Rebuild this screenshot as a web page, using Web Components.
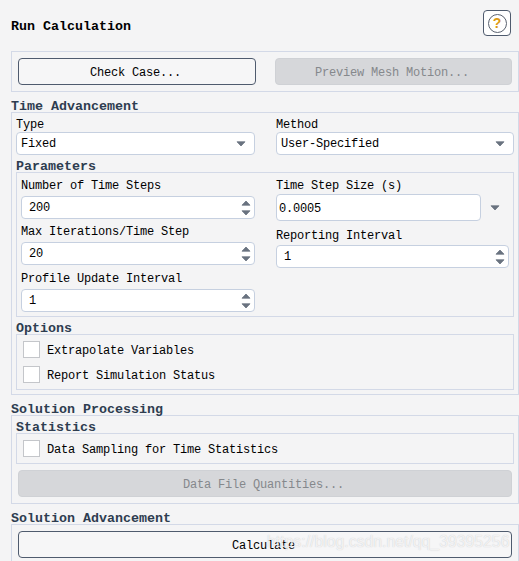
<!DOCTYPE html>
<html>
<head>
<meta charset="utf-8">
<style>
  html, body { margin: 0; height: 561px; overflow: hidden; background: #f4f4f5; }
  body { font: 12px/13px "Liberation Mono", monospace; letter-spacing: -0.2px; color: #000; }
</style>
</head>
<body>
<run-panel></run-panel>

<script>
const downArrow = '<svg width="10" height="6" viewBox="0 0 10 6"><path d="M1 .8H9L5 5Z" fill="#6a7380" stroke="#6a7380" stroke-width=".8" stroke-linejoin="round"/></svg>';

class UiGroup extends HTMLElement {
    constructor() {
        super();
        this.attachShadow({ mode: 'open' }).innerHTML = `
          <style>
            :host { display: block; }
            .heading { margin-top: 5px; height: 12px; font-weight: bold; color: #2e3d50; letter-spacing: 0; font-size: 13.33px; }
            :host([outer]) .heading { margin-top: 8px; }
            .box { border: 1px solid #d3d9e7; padding: 0 4px 4px; }
            :host([tight]) .box { padding: 6px; }
            :host([wide]) .box { padding: 0 4px 6px; }
          </style>
          <div class="heading" part="heading">${this.getAttribute('heading') || ''}</div>
          <div class="box"><slot></slot></div>`;
        if (!this.hasAttribute('heading')) this.shadowRoot.querySelector('.heading').remove();
    }
}

class UiButton extends HTMLElement {
    constructor() {
        super();
        this.attachShadow({ mode: 'open' }).innerHTML = `
          <style>
            :host { display: flex; box-sizing: border-box; height: 27px; align-items: center; justify-content: center; padding: 3px 3px 0 0;
                    border: 1px solid #4f5b6e; border-radius: 4px; background: #f6f6f7; }
            :host([disabled]) { background: #d6d7da; border-color: #cfd1d5; color: #85888c; }
          </style>
          <slot></slot>`;
    }
}

class UiField extends HTMLElement {
    constructor() {
        super();
        this.attachShadow({ mode: 'open' }).innerHTML = `
          <style>
            :host { display: block; }
            .label { display: block; height: 13px; padding: var(--top, 7px) 0 var(--gap, 3px); }
          </style>
          <span class="label">${this.getAttribute('label')}</span>
          <slot></slot>`;
    }
}

class UiSelect extends HTMLElement {
    constructor() {
        super();
        this.attachShadow({ mode: 'open' }).innerHTML = `
          <style>
            :host { display: flex; box-sizing: border-box; height: 23px; align-items: center; padding: 0 8px 0 4px;
                    background: #fff; border: 1px solid #c6d0e0; border-radius: 4px; }
            .value { flex: 1; padding-top: 2px; }
            svg { display: block; }
          </style>
          <span class="value"><slot></slot></span>${downArrow}`;
    }
}

class UiSpin extends HTMLElement {
    constructor() {
        super();
        this.attachShadow({ mode: 'open' }).innerHTML = `
          <style>
            :host { display: flex; box-sizing: border-box; height: 23px; align-items: center; padding: 0 3px 0 7px;
                    background: #fff; border: 1px solid #c6d0e0; border-radius: 4px; }
            .value { flex: 1; padding-top: 2px; }
            .arrows { display: flex; flex-direction: column; gap: 4px; }
            svg { display: block; }
          </style>
          <span class="value"><slot></slot></span>
          <span class="arrows">
            <svg width="10" height="6" viewBox="0 0 10 6"><path d="M1 5.2H9L5 1Z" fill="#6a7380" stroke="#6a7380" stroke-width=".8" stroke-linejoin="round"/></svg>
            ${downArrow}
          </span>`;
    }
}

class UiInput extends HTMLElement {
    constructor() {
        super();
        this.attachShadow({ mode: 'open' }).innerHTML = `
          <style>
            :host { display: flex; box-sizing: border-box; height: 27px; align-items: center; padding: 3px 3px 0 2px;
                    background: #fff; border: 1px solid #c6d0e0; border-radius: 4px; }
          </style>
          <slot></slot>`;
    }
}

class UiCheck extends HTMLElement {
    constructor() {
        super();
        this.attachShadow({ mode: 'open' }).innerHTML = `
          <style>
            :host { display: flex; align-items: center; gap: 7px; height: 17px; }
            .mark { box-sizing: border-box; width: 17px; height: 17px; background: #fff; border: 1px solid #c4c6ca; }
            .text { padding-top: 4px; }
          </style>
          <span class="mark"></span><span class="text"><slot></slot></span>`;
    }
}

class UiHelp extends HTMLElement {
    constructor() {
        super();
        this.attachShadow({ mode: 'open' }).innerHTML = `
          <style>
            :host { display: flex; box-sizing: border-box; width: 28px; height: 26px; align-items: center; justify-content: center;
                    background: #fff; border: 1px solid #4f5b6e; border-radius: 4px; }
            .ring { box-sizing: border-box; width: 19px; height: 19px; display: flex; align-items: center; justify-content: center;
                    border: 1.5px solid #5a6270; border-radius: 50%;
                    font: bold 14px/1 "Liberation Sans", sans-serif; letter-spacing: 0; color: #dd9a12; }
          </style>
          <span class="ring">?</span>`;
    }
}

class UiWatermark extends HTMLElement {
    constructor() {
        super();
        this.attachShadow({ mode: 'open' }).innerHTML = `
          <style>
            :host { position: absolute; left: 267px; top: 533px; font: 15.8px/18px "Liberation Sans", sans-serif; letter-spacing: 0;
                    color: rgba(255,255,255,.75); text-shadow: 0 0 1px rgba(120,120,125,.4); white-space: nowrap; }
          </style>
          <slot></slot>`;
    }
}

class RunPanel extends HTMLElement {
    constructor() {
        super();
        this.attachShadow({ mode: 'open' }).innerHTML = `
          <style>
            :host { display: block; position: relative; width: 519px; }
            .title { display: flex; justify-content: space-between; align-items: center; padding: 10px 8px 15px 11px;
                     font-weight: bold; font-size: 13.33px; letter-spacing: 0; }
            .title span { margin-top: 6px; }
            .body { margin-left: 11px; }
            .two { display: grid; grid-template-columns: 238px 237px; gap: 19px; }
            .pair { display: grid; grid-template-columns: 239px 238px; gap: 21px; }
            .params { display: grid; grid-template-columns: 234px 233px; gap: 21px; }
            .col { display: flex; flex-direction: column; }
            .step { display: flex; align-items: center; gap: 9px; }
            .step ui-input { width: 205px; }
            .checks { display: flex; flex-direction: column; gap: 8px; }
            .inset { margin: 6px 2px 0; }
          </style>
          <div class="title"><span>Run Calculation</span><ui-help></ui-help></div>
          <div class="body">
            <ui-group tight>
              <div class="two">
                <ui-button>Check Case...</ui-button>
                <ui-button disabled>Preview Mesh Motion...</ui-button>
              </div>
            </ui-group>

            <ui-group outer heading="Time Advancement">
              <div class="pair">
                <ui-field label="Type" style="--top:6px;--gap:0px"><ui-select>Fixed</ui-select></ui-field>
                <ui-field label="Method" style="--top:6px;--gap:0px"><ui-select>User-Specified</ui-select></ui-field>
              </div>
              <ui-group heading="Parameters">
                <div class="params">
                  <div class="col">
                    <ui-field label="Number of Time Steps"><ui-spin>200</ui-spin></ui-field>
                    <ui-field label="Max Iterations/Time Step"><ui-spin>20</ui-spin></ui-field>
                    <ui-field label="Profile Update Interval" style="--top:8px"><ui-spin>1</ui-spin></ui-field>
                  </div>
                  <div class="col">
                    <ui-field label="Time Step Size (s)" style="--gap:1px">
                      <div class="step"><ui-input>0.0005</ui-input>${downArrow}</div>
                    </ui-field>
                    <ui-field label="Reporting Interval" style="--top:9px;--gap:2px"><ui-spin>1</ui-spin></ui-field>
                  </div>
                </div>
              </ui-group>
              <ui-group tight heading="Options">
                <div class="checks">
                  <ui-check>Extrapolate Variables</ui-check>
                  <ui-check>Report Simulation Status</ui-check>
                </div>
              </ui-group>
            </ui-group>

            <ui-group outer wide heading="Solution Processing">
              <ui-group tight heading="Statistics">
                <ui-check>Data Sampling for Time Statistics</ui-check>
              </ui-group>
              <ui-button class="inset" disabled>Data File Quantities...</ui-button>
            </ui-group>

            <ui-group outer tight heading="Solution Advancement">
              <ui-button>Calculate</ui-button>
            </ui-group>
          </div>
          <ui-watermark>https://blog.csdn.net/qq_39395256</ui-watermark>`;
    }
}

// children first so upgrades inside the panel's shadow root find them
customElements.define('ui-group', UiGroup);
customElements.define('ui-button', UiButton);
customElements.define('ui-field', UiField);
customElements.define('ui-select', UiSelect);
customElements.define('ui-spin', UiSpin);
customElements.define('ui-input', UiInput);
customElements.define('ui-check', UiCheck);
customElements.define('ui-help', UiHelp);
customElements.define('ui-watermark', UiWatermark);
customElements.define('run-panel', RunPanel);
</script>
</body>
</html>
